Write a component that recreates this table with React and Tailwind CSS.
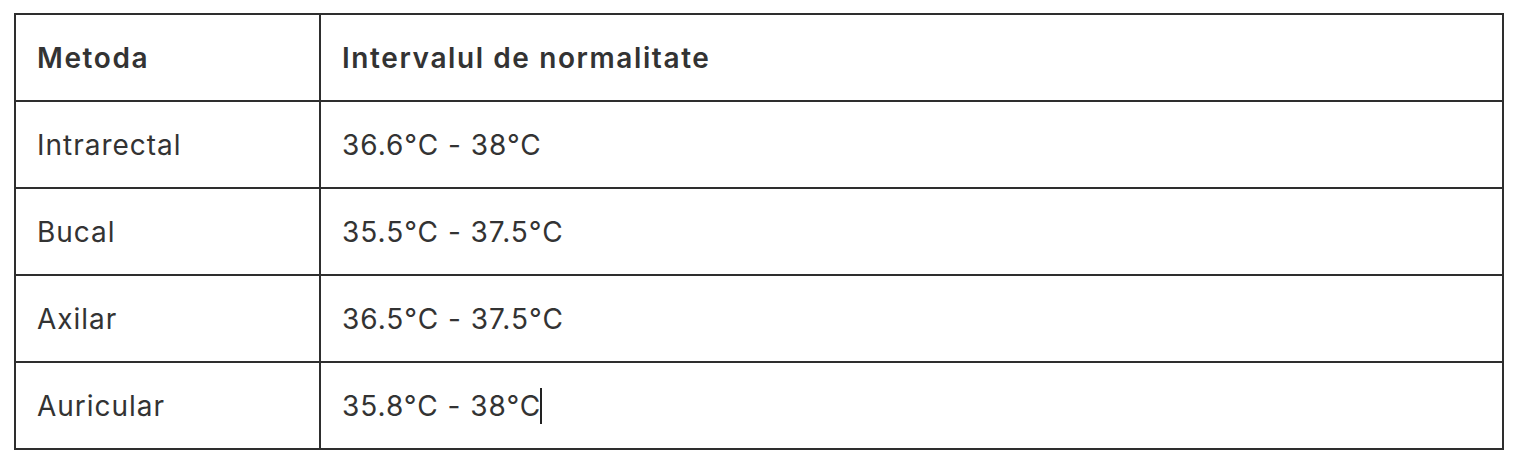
export default function App() {
  const rows = [
    ["Intrarectal", "36.6°C - 38°C"],
    ["Bucal", "35.5°C - 37.5°C"],
    ["Axilar", "36.5°C - 37.5°C"],
    ["Auricular", "35.8°C - 38°C"],
  ];
  return (
    <div className="w-[1526px] h-[466px] bg-white pt-[13px] pl-[14px]" style={{ fontFamily: "Inter, 'Noto Sans', sans-serif" }}>
      <table className="w-[1490px] border-collapse border-2 border-[#2e2e2e] text-[#333333] table-fixed">
        <colgroup>
          <col className="w-[305px]" />
          <col />
        </colgroup>
        <thead>
          <tr className="h-[87px]">
            <th className="border-2 border-[#2e2e2e] text-left font-semibold text-[28px] tracking-[0.057em] pl-[21px] align-middle">Metoda</th>
            <th className="border-2 border-[#2e2e2e] text-left font-semibold text-[28px] tracking-[0.057em] pl-[21px] align-middle">Intervalul de normalitate</th>
          </tr>
        </thead>
        <tbody>
          {rows.map((r, i) => (
            <tr key={i} className="h-[87px]">
              <td className="border-2 border-[#2e2e2e] text-[28px] tracking-[0.035em] pl-[21px] align-middle">{r[0]}</td>
              <td className="border-2 border-[#2e2e2e] text-[28px] tracking-[0.035em] pl-[21px] align-middle">
                {r[1]}
                {i === rows.length - 1 && (
                  <span className="inline-block w-[2px] h-[36px] bg-[#222] align-middle -ml-[1px] -mt-[4px]"></span>
                )}
              </td>
            </tr>
          ))}
        </tbody>
      </table>
    </div>
  );
}
